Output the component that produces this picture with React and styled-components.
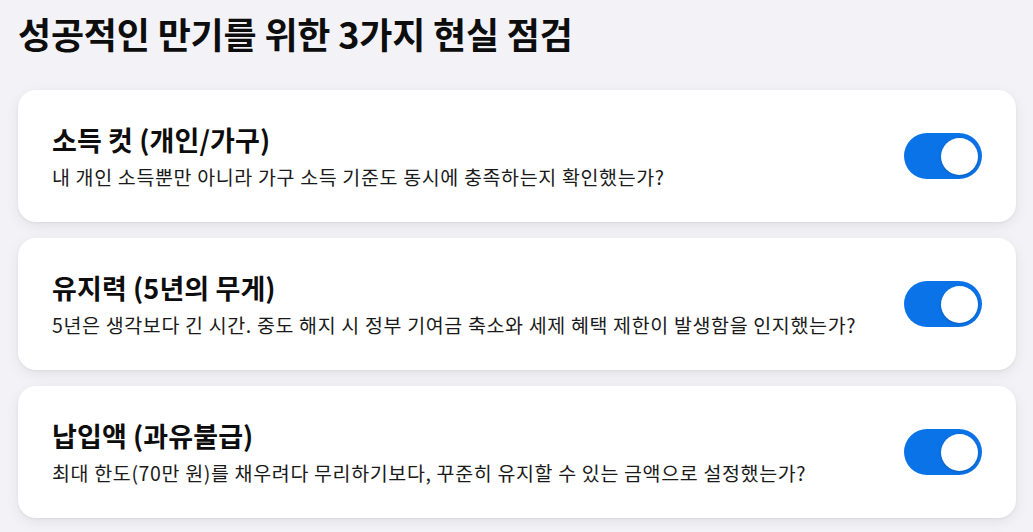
import React from "react";
import styled, { createGlobalStyle } from "styled-components";

const Global = createGlobalStyle`
  html, body { margin: 0; padding: 0; background: #f2f2f7; }
  body { font-family: "Noto Sans CJK KR", "Noto Sans", sans-serif; color: #111; }
`;

const Page = styled.div`
  padding: 9px 17px 16px 18px;
  display: flex;
  flex-direction: column;
`;

const Heading = styled.h1`
  margin: 0 0 33px 0;
  font-size: 36px;
  line-height: 48px;
  font-weight: 700;
  letter-spacing: -0.2px;
  color: #0d0d0d;
`;

const List = styled.div`
  display: flex;
  flex-direction: column;
  gap: 16px;
`;

const Card = styled.div`
  background: #fff;
  border-radius: 18px;
  height: 132px;
  box-sizing: border-box;
  padding: 0 34px;
  display: flex;
  align-items: center;
  justify-content: space-between;
  box-shadow: 0 4px 14px rgba(0, 0, 0, 0.07), 0 1px 3px rgba(0, 0, 0, 0.05);
`;

const Text = styled.div`
  display: flex;
  flex-direction: column;
  gap: 5px;
`;

const Title = styled.div`
  font-size: 27px;
  line-height: 36px;
  font-weight: 700;
  color: #0d0d0d;
  letter-spacing: 0.1px;
`;

const Desc = styled.div`
  font-size: 19.5px;
  line-height: 27px;
  font-weight: 400;
  color: #1a1a1a;
  letter-spacing: 0.65px;
`;

const Toggle = styled.div`
  width: 78px;
  height: 46px;
  border-radius: 23px;
  background: ${(p) => (p.$on ? "#0b73e8" : "#d1d1d6")};
  display: flex;
  align-items: center;
  justify-content: ${(p) => (p.$on ? "flex-end" : "flex-start")};
  padding: 0 4px;
  box-sizing: border-box;
  flex-shrink: 0;
`;

const Knob = styled.div`
  width: 37px;
  height: 37px;
  border-radius: 50%;
  background: #fff;
  box-shadow: 0 1px 3px rgba(0, 0, 0, 0.2);
`;

const items = [
  {
    title: "소득 컷 (개인/가구)",
    desc: "내 개인 소득뿐만 아니라 가구 소득 기준도 동시에 충족하는지 확인했는가?",
  },
  {
    title: "유지력 (5년의 무게)",
    desc: "5년은 생각보다 긴 시간. 중도 해지 시 정부 기여금 축소와 세제 혜택 제한이 발생함을 인지했는가?",
  },
  {
    title: "납입액 (과유불급)",
    desc: "최대 한도(70만 원)를 채우려다 무리하기보다, 꾸준히 유지할 수 있는 금액으로 설정했는가?",
  },
];

export default function App() {
  return (
    <>
      <Global />
      <Page>
        <Heading>성공적인 만기를 위한 3가지 현실 점검</Heading>
        <List>
          {items.map((it) => (
            <Card key={it.title}>
              <Text>
                <Title>{it.title}</Title>
                <Desc>{it.desc}</Desc>
              </Text>
              <Toggle $on>
                <Knob />
              </Toggle>
            </Card>
          ))}
        </List>
      </Page>
    </>
  );
}
